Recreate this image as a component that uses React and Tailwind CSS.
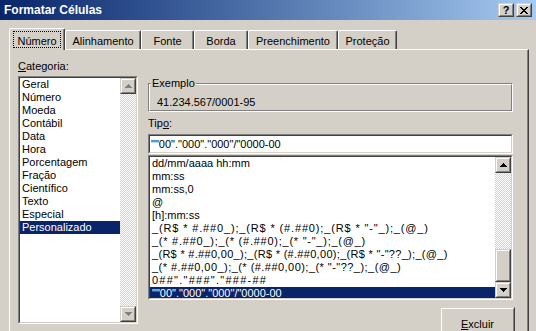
import React from "react";

const Raised = ({ className = "", innerClassName = "", children }) => (
  <div className={`border border-t-[#d4d0c8] border-l-[#d4d0c8] border-b-[#404040] border-r-[#404040] bg-[#d4d0c8] ${className}`}>
    <div className={`w-full h-full border border-t-white border-l-white border-b-[#808080] border-r-[#808080] ${innerClassName}`}>
      {children}
    </div>
  </div>
);

const Sunken = ({ className = "", innerClassName = "", children }) => (
  <div className={`border border-t-[#808080] border-l-[#808080] border-b-white border-r-white ${className}`}>
    <div className={`w-full h-full border border-t-[#404040] border-l-[#404040] border-b-[#d4d0c8] border-r-[#d4d0c8] bg-white ${innerClassName}`}>
      {children}
    </div>
  </div>
);

const Arrow = ({ up, color }) => (
  <svg width="7" height="4" viewBox="0 0 7 4" shapeRendering="crispEdges" className="block">
    {up ? (
      <g fill={color}>
        <rect x="3" y="0" width="1" height="1" />
        <rect x="2" y="1" width="3" height="1" />
        <rect x="1" y="2" width="5" height="1" />
        <rect x="0" y="3" width="7" height="1" />
      </g>
    ) : (
      <g fill={color}>
        <rect x="0" y="0" width="7" height="1" />
        <rect x="1" y="1" width="5" height="1" />
        <rect x="2" y="2" width="3" height="1" />
        <rect x="3" y="3" width="1" height="1" />
      </g>
    )}
  </svg>
);

const Track = ({ className = "" }) => (
  <div
    className={`bg-[image:repeating-conic-gradient(#d4d0c8_0_25%,#ffffff_0_50%)] bg-[length:2px_2px] ${className}`}
  />
);

const ScrollBar = ({ disabled, thumb }) => {
  const c = disabled ? "#808080" : "#000000";
  return (
    <div className="w-[16px] h-full flex flex-col shrink-0">
      <Raised className="w-[16px] h-[16px] shrink-0" innerClassName="flex items-center justify-center">
        <Arrow up color={c} />
      </Raised>
      <Track className="flex-1" />
      {thumb && <Raised className="w-[16px] h-[33px] shrink-0" />}
      <Raised className="w-[16px] h-[16px] shrink-0" innerClassName="flex items-center justify-center">
        <Arrow color={c} />
      </Raised>
    </div>
  );
};

const categories = [
  "Geral",
  "Número",
  "Moeda",
  "Contábil",
  "Data",
  "Hora",
  "Porcentagem",
  "Fração",
  "Científico",
  "Texto",
  "Especial",
  "Personalizado",
];

const formats = [
  { t: "dd/mm/aaaa hh:mm", s: "" },
  { t: "mm:ss", s: "" },
  { t: "mm:ss,0", s: "" },
  { t: "@", s: "" },
  { t: "[h]:mm:ss", s: "" },
  { t: '_(R$ * #.##0_);_(R$ * (#.##0);_(R$ * "-"_);_(@_)', s: "tracking-[0.85px]" },
  { t: '_(* #.##0_);_(* (#.##0);_(* "-"_);_(@_)', s: "tracking-[0.75px]" },
  { t: '_(R$ * #.##0,00_);_(R$ * (#.##0,00);_(R$ * "-"??_);_(@_)', s: "tracking-[0.3px]" },
  { t: '_(* #.##0,00_);_(* (#.##0,00);_(* "-"??_);_(@_)', s: "tracking-[0.46px]" },
  { t: '0##"."###"."###-##', s: "tracking-[1.25px]" },
  { t: '""00"."000"."000"/"0000-00', s: "" },
];

const tabs = [
  { label: "Alinhamento", w: "w-[76px]" },
  { label: "Fonte", w: "w-[53px]" },
  { label: "Borda", w: "w-[54px]" },
  { label: "Preenchimento", w: "w-[90px]" },
  { label: "Proteção", w: "w-[59px]" },
];

export default function App() {
  return (
    <div className="w-[536px] h-[331px] overflow-hidden bg-[#d4d0c8] relative font-['Liberation_Sans',Arial,sans-serif] text-[11px] leading-[13px] text-black">
      {/* Title bar */}
      <div className="h-[20px] bg-gradient-to-r from-[#0a246a] to-[#a6caf0] flex items-center pl-[4px] pr-[4px]">
        <span className="text-white font-bold text-[12px] leading-[14px] flex-1">Formatar Células</span>
        <div className="flex items-center gap-[2px]">
          <Raised className="w-[16px] h-[14px]" innerClassName="flex items-center justify-center">
            <span className="font-bold text-[11px] leading-[11px]">?</span>
          </Raised>
          <Raised className="w-[16px] h-[14px]" innerClassName="flex items-center justify-center">
            <svg width="8" height="7" viewBox="0 0 8 7" shapeRendering="crispEdges">
              <path d="M0 0h2v1H0zM6 0h2v1H6zM1 1h2v1H1zM5 1h2v1H5zM2 2h4v1H2zM3 3h2v1H3zM2 4h4v1H2zM1 5h2v1H1zM5 5h2v1H5zM0 6h2v1H0zM6 6h2v1H6z" fill="#000" />
            </svg>
          </Raised>
        </div>
      </div>

      {/* Tabs */}
      <div className="ml-[9px] mt-[8px] h-[21px] flex items-end">
        <div className="relative z-10 w-[56px] h-[22px] -mb-[1px] bg-[#d4d0c8] border-t border-l border-t-white border-l-white border-r border-r-[#404040] rounded-t-[2px] shadow-[inset_-1px_0_#808080] flex items-start justify-center pt-[2px]">
          <div className="border border-dotted border-black px-[2px] pt-[3px] h-[17px] w-[48px] flex justify-center">
            Número
          </div>
        </div>
        {tabs.map((t) => (
          <div
            key={t.label}
            className={`${t.w} h-[19px] bg-[#d4d0c8] border-t border-l border-t-white border-l-white border-r border-r-[#404040] rounded-t-[2px] shadow-[inset_-1px_0_#808080] flex items-center justify-center pt-[3px]`}
          >
            {t.label}
          </div>
        ))}
      </div>

      {/* Panel */}
      <div className="ml-[9px] w-[520px] h-[300px] border-t border-l border-t-white border-l-white border-r border-r-[#404040] shadow-[inset_-1px_0_#808080] flex pl-[8px] gap-[10px]">
        {/* Left column */}
        <div className="w-[120px] pt-[10px] flex flex-col">
          <div className="h-[13px]">
            <span className="underline">C</span>ategoria:
          </div>
          <Sunken className="mt-[3px] w-[120px] h-[248px]" innerClassName="flex">
            <div className="flex-1 flex flex-col overflow-hidden">
              {categories.map((c) => (
                <div
                  key={c}
                  className={`h-[13px] pl-[2px] whitespace-nowrap ${c === "Personalizado" ? "bg-[#0a246a] text-white" : ""}`}
                >
                  {c}
                </div>
              ))}
            </div>
            <ScrollBar disabled />
          </Sunken>
        </div>

        {/* Right column */}
        <div className="w-[365px] pt-[27px] flex flex-col">
          <div className="relative pt-[6px]">
            <div className="h-[29px] border border-t-[#808080] border-l-[#808080] border-b-white border-r-white">
              <div className="h-full border border-t-white border-l-white border-b-[#808080] border-r-[#808080] pl-[7px] pt-[11px]">
                41.234.567/0001-95
              </div>
            </div>
            <div className="absolute top-0 left-[3px] px-[1px] bg-[#d4d0c8] h-[13px]">Exemplo</div>
          </div>
          <div className="mt-[5px] h-[13px]">
            Tip<span className="underline">o</span>:
          </div>
          <Sunken className="mt-[4px] h-[20px]" innerClassName="pl-[1px] pt-[2px] whitespace-pre">
            {'""00"."000"."000"/"0000-00'}
          </Sunken>
          <Sunken className="mt-[1px] h-[145px]" innerClassName="flex">
            <div className="flex-1 flex flex-col overflow-hidden">
              {formats.map((f, i) => (
                <div
                  key={i}
                  className={`h-[13px] shrink-0 pl-[2px] whitespace-pre ${f.s} ${i === formats.length - 1 ? "bg-[#0a246a] text-white" : ""}`}
                >
                  {f.t}
                </div>
              ))}
            </div>
            <ScrollBar thumb />
          </Sunken>
          <div className="mt-[7px] flex justify-end -mr-[2px]">
            <Raised className="w-[75px] h-[34px]" innerClassName="flex items-center justify-center">
              <span>
                <span className="underline">E</span>xcluir
              </span>
            </Raised>
          </div>
        </div>
      </div>
    </div>
  );
}
